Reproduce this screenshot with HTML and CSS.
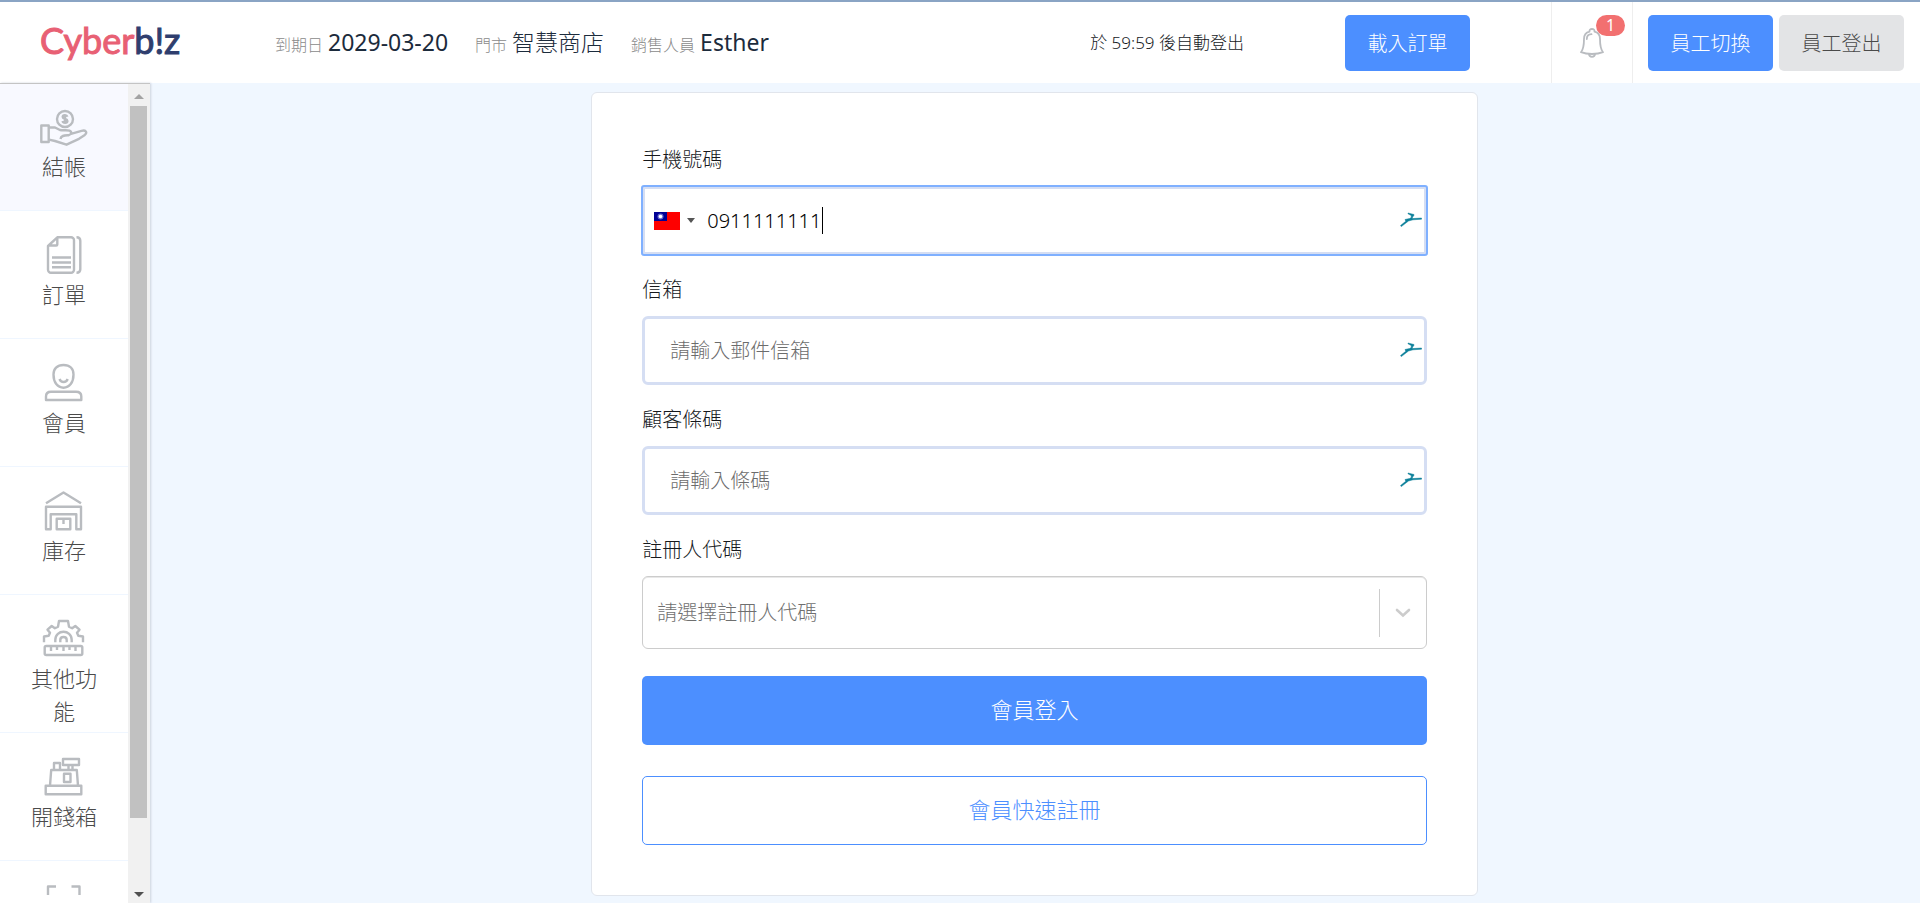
FILE: index.html
```html
<!DOCTYPE html>
<html lang="zh-Hant">
<head>
<meta charset="utf-8">
<title>Cyberbiz POS</title>
<link rel="stylesheet" href="styles.css">
</head>
<body>
<header class="topbar">
  <a class="logo" href="#" aria-label="Cyberbiz"><span class="logo-red">Cyber</span><span class="logo-navy">b!z</span></a>
  <dl class="info">
    <div class="info-item"><dt>到期日</dt><dd>2029-03-20</dd></div>
    <div class="info-item"><dt>門市</dt><dd class="store">智慧商店</dd></div>
    <div class="info-item"><dt>銷售人員</dt><dd>Esther</dd></div>
  </dl>
  <p class="timer">於 59:59 後自動登出</p>
  <button class="btn btn-primary" type="button">載入訂單</button>
  <div class="bell-cell">
    <button class="bell" type="button" aria-label="通知">
      <svg width="24" height="30" viewBox="0 0 24 30" fill="none" stroke="#b9bcc0" stroke-width="1.800" stroke-linejoin="round" stroke-linecap="round"><path d="M9.5 3.6C9.3 1.600 10.300 1 12 1s2.700.6 2.500 2.600C18.500 4.500 20 7.500 20 11c0 7 .8 10.500 3 13.200C19.500 25.600 16 26 12 26S4.500 25.600 1 24.200C3.200 21.500 4 18 4 11c0-3.500 1.500-6.500 5.500-7.400z"/><path d="M9 26.200c.3 3.500 5.700 3.500 6 0M6.800 11c0-2.800 1.600-4.600 4.700-4.800"/></svg>
      <span class="badge">1</span>
    </button>
  </div>
  <div class="staff">
    <button class="btn btn-primary" type="button">員工切換</button>
    <button class="btn btn-muted" type="button">員工登出</button>
  </div>
</header>

<div class="body">
  <aside class="sidebar">
    <nav class="menu">
      <a class="menu-item active" href="#">
        <svg class="icon" viewBox="0 0 48 40"><rect x="1.300" y="18.500" width="7.400" height="16.500"/><circle cx="25" cy="12" r="8"/><path d="M27.300 9.800c-.5-2.300-4.600-2-4.600.2 0 2.500 4.700 1.500 4.700 4 0 2.300-4.400 2.300-4.800 0M25 7.200v9.600"/><path d="M9 20.500h6l5 2.500c4 .8 6.500-.3 9.500.7 2.500 1 2 4-1 4.500-4 .2-7.500 0-8 3.800M31 26.800l10.500-2.900c4-1.200 6.500 1.300 3.300 4L39 31.800l-12.500 5.900L15 34l-6-1.300"/></svg>
        <span>結帳</span>
      </a>
      <a class="menu-item" href="#">
        <svg class="icon" viewBox="0 0 48 40"><path d="M17.300 2.300H31a3 3 0 0 1 3 3v29.400a3 3 0 0 1-3 3H11a3 3 0 0 1-3-3V11zM17.300 2.300V9.500a1 1 0 0 1-1 1H8M36.500 2.300c2.500 0 3.800 1.200 3.800 3.500v28.400c0 2.300-1.300 3.500-3.800 3.500M12 22.500h19M12 27.500h19M12 32.300h19"/></svg>
        <span>訂單</span>
      </a>
      <a class="menu-item" href="#">
        <svg class="icon" viewBox="0 0 48 40"><path d="M23.500 2c6.500 0 10 4 10 9.500 0 8-4 13.200-10 13.200s-10-5.200-10-13.200C13.500 6 17 2 23.500 2zM19.500 16c1.500 4 6.700 4 8.200 0M6 37v-3.500c0-3.500 2-4.700 5-4.700h25c3.500 0 5.300 1.700 5.300 4.700V37z"/></svg>
        <span>會員</span>
      </a>
      <a class="menu-item" href="#">
        <svg class="icon" viewBox="0 0 48 40"><path d="M6 12.300 23.500 1.500 41 12.300M6 15.700h35v22.600h-4.700v-15H10.700v15H6zM16.700 27.700h13.600v10.600H16.700zM23.500 27.700V33"/></svg>
        <span>庫存</span>
      </a>
      <a class="menu-item" href="#">
        <svg class="icon" viewBox="0 0 48 40"><path d="M4 23.300v-5.800l4.700-.8L10 13.700l-2.500-3 4.200-3.700 3.200 2.300L18 7.700 19 2h9l1 5.700 3.100 1.600L35.300 7l4.200 3.700-2.500 3 1.300 3 4.700.8v5.800M15.300 23.300V21c0-11 16.400-11 16.400 0v2.300M20.300 23.300V21c0-4 6.400-4 6.400 0v2.300"/><rect x="4.700" y="27" width="37.600" height="9" rx="1.500"/><path d="M11 27v5M17 27v4M23.500 27v5M29.500 27v4M35.500 27v5"/></svg>
        <span>其他功能</span>
      </a>
      <a class="menu-item" href="#">
        <svg class="icon" viewBox="0 0 48 40"><path d="M5.700 28.700h35.600v8.600H5.700zM10 28.700 11.200 13h25.600L38 28.700M24 16.700h6.500V25H24zM14 13V6h6v7M23 2h16v6H23zM28.500 8v5M32.500 8v5"/></svg>
        <span>開錢箱</span>
      </a>
      <a class="menu-item" href="#" aria-label="掃描">
        <svg class="icon" viewBox="0 0 48 40"><path d="M16 1.500H8V10M31.500 1.500h8V10M8 30v8h8M39.500 30v8h-8"/></svg>
      </a>
    </nav>
    <div class="scrollbar" aria-hidden="true">
      <svg class="arrow arrow-up" viewBox="0 0 22 23"><path d="M6 16h10l-5-5z"/></svg>
      <div class="track"><div class="thumb"></div></div>
      <svg class="arrow arrow-down" viewBox="0 0 22 23"><path d="M6 12h10l-5 5z"/></svg>
    </div>
  </aside>

  <main class="main">
    <form class="card">
      <div class="field">
        <label for="phone">手機號碼</label>
        <div class="control phone">
          <input id="phone" class="text-input" type="tel" value="0911111111">
          <button class="country" type="button" aria-label="台灣">
            <svg width="26" height="18" viewBox="0 0 26 18"><path fill="#fe0000" d="M0 0h26v18H0z"/><path fill="#000095" d="M0 0h13v9H0z"/><circle cx="6.500" cy="4.500" r="3" fill="#6a6ad0"/><circle cx="6.500" cy="4.500" r="1.800" fill="#fff"/></svg>
            <svg width="8" height="5" viewBox="0 0 8 5"><path fill="#555" d="M0 0h8L4 5z"/></svg>
          </button>
          <span class="caret"></span>
          <svg class="bird" viewBox="0 0 22 15"><path d="M8 1l6 1.500-.3 1.500-1.200 1-.2 1.600L21.500 6v1.200L13 7.800 8.500 9 1.300 14.600.5 13.600 5.800 9.200 5 7.500l4.600-1 1.700-1-.1-2L8 1.800z"/></svg>
        </div>
      </div>
      <div class="field">
        <label for="email">信箱</label>
        <div class="control">
          <input id="email" class="text-input" type="email" placeholder="請輸入郵件信箱">
          <svg class="bird" viewBox="0 0 22 15"><path d="M8 1l6 1.500-.3 1.500-1.200 1-.2 1.600L21.500 6v1.200L13 7.800 8.500 9 1.300 14.600.5 13.600 5.800 9.200 5 7.500l4.600-1 1.700-1-.1-2L8 1.800z"/></svg>
        </div>
      </div>
      <div class="field">
        <label for="barcode">顧客條碼</label>
        <div class="control">
          <input id="barcode" class="text-input" type="text" placeholder="請輸入條碼">
          <svg class="bird" viewBox="0 0 22 15"><path d="M8 1l6 1.500-.3 1.500-1.200 1-.2 1.600L21.500 6v1.200L13 7.800 8.500 9 1.300 14.600.5 13.600 5.800 9.200 5 7.500l4.600-1 1.700-1-.1-2L8 1.800z"/></svg>
        </div>
      </div>
      <div class="field">
        <label for="registrar">註冊人代碼</label>
        <div class="control select-wrap">
          <select id="registrar"><option>請選擇註冊人代碼</option></select>
          <span class="indicator"><svg width="16" height="10" viewBox="0 0 16 10"><path d="M2 2l6 5.500L14 2" fill="none" stroke="#ccc" stroke-width="2.600" stroke-linecap="round"/></svg></span>
        </div>
      </div>
      <div class="actions">
        <button class="wide wide-primary" type="submit">會員登入</button>
        <button class="wide wide-outline" type="button">會員快速註冊</button>
      </div>
    </form>
  </main>
</div>
</body>
</html>
```
FILE: styles.css
```css
* { box-sizing: border-box; }

body {
  margin: 0;
  height: 100vh;
  display: flex;
  flex-direction: column;
  overflow: hidden;
  background: #f0f7ff;
  color: #16191d;
  font-family: "Noto Sans", "Noto Sans CJK TC", sans-serif;
  font-weight: 300;
  font-size: 20px;
}

button, input, select { font: inherit; }
a { color: inherit; text-decoration: none; }

/* Top bar */
.topbar {
  display: flex;
  align-items: center;
  flex: none;
  height: 83px;
  border-top: 2px solid #8aa4c4;
  background: #fff;
}

.logo {
  width: 235px;
  margin-left: 40px;
  padding-bottom: 6px;
  font-family: Lato, sans-serif;
  font-weight: 400;
  font-size: 36px;
  line-height: 48px;
  -webkit-text-stroke: 1px;
}
.logo-red { color: #e86074; }
.logo-navy { color: #2f3e6e; }

.info { display: flex; gap: 27px; margin: 0; padding-top: 2px; }
.info-item { display: flex; align-items: baseline; gap: 5px; line-height: 32px; }
.info dt { color: #8a8a8a; font-size: 16px; }
.info dd { margin: 0; color: #1c2b3c; font-size: 23px; font-weight: 400; }
.info .store { font-weight: 300; }

.timer { margin: 0 101px 0 auto; font-size: 17px; line-height: 24px; }

.btn {
  width: 125px;
  height: 56px;
  padding: 0;
  border: 0;
  border-radius: 5px;
  font-size: 20px;
}
.btn-primary { background: #4c8fff; color: #fff; }
.btn-muted { background: #e3e4e6; color: #4a4a4a; }

.bell-cell {
  display: flex;
  align-items: center;
  justify-content: center;
  align-self: stretch;
  width: 82px;
  margin-left: 81px;
  border: solid #eee;
  border-width: 0 1px;
}
.bell { position: relative; padding: 0; border: 0; background: none; height: 30px; }
.bell svg { display: block; }
.badge {
  position: absolute;
  left: 16px;
  top: -13px;
  width: 29px;
  height: 21px;
  border-radius: 11px;
  background: #f27070;
  color: #fff;
  font-size: 16px;
  font-weight: 400;
  line-height: 21px;
  text-align: center;
}
.staff { display: flex; gap: 6px; padding: 0 16px 0 15px; }

/* Sidebar */
.body { display: flex; flex: 1; min-height: 0; }
.sidebar {
  display: flex;
  flex: none;
  width: 150px;
  background: #fff;
  box-shadow: 1px 0 2px #cdd3de;
}
.menu {
  flex: 1;
  overflow: hidden;
}
.menu-item {
  display: flex;
  flex-direction: column;
  align-items: center;
  gap: 3px;
  min-height: 128px;
  padding: 24px 27px 4px;
  border-bottom: 1px solid #eff6ff;
  color: #4a4a4a;
  font-size: 22px;
  line-height: 33px;
  text-align: center;
}
.menu-item.active { background: #f8f9ff; box-shadow: inset 0 1px #c4c4c4; }
.icon {
  flex: none;
  width: 48px;
  height: 40px;
  fill: none;
  stroke: #b9bcc0;
  stroke-width: 2.4;
  stroke-linejoin: round;
}
.scrollbar {
  display: flex;
  flex-direction: column;
  width: 22px;
  background: #f1f1f1;
  box-shadow: inset 0 1px #c4c4c4;
}
.arrow { flex: none; width: 22px; height: 23px; }
.arrow-up { fill: #a3a3a3; }
.arrow-down { fill: #505050; }
.track { flex: 1; padding: 0 3px 0 2px; }
.thumb { height: 92%; background: #c1c1c1; }

/* Member form */
.main { flex: 1; padding: 9px 1px 0 0; }
.card {
  width: calc(50% + 2px);
  margin: 0 auto;
  padding: 50px;
  border: 1px solid #e1e5ec;
  border-radius: 6px;
  background: #fff;
}
.field { margin-bottom: 18px; }
.field label { display: block; margin-bottom: 9px; line-height: 34px; }
.control { position: relative; }
.text-input {
  display: block;
  width: 100%;
  height: 69px;
  padding: 0 40px 0 25px;
  border: 3px solid #d5def3;
  border-radius: 6px;
  background: #fff;
  color: #111;
  outline: none;
}
.text-input::placeholder { color: #6c6c6c; opacity: 1; }
.phone .text-input {
  padding-left: 62px;
  border-radius: 2px;
  outline: 2px solid #7fb0ff;
  outline-offset: -1px;
  color: #000;
}
.country {
  position: absolute;
  top: 0;
  bottom: 0;
  left: 12px;
  display: flex;
  align-items: center;
  gap: 7px;
  padding: 0;
  border: 0;
  background: none;
}
.caret {
  position: absolute;
  top: 21px;
  left: 180px;
  width: 1px;
  height: 27px;
  background: #000;
}
.bird {
  position: absolute;
  top: 26px;
  right: 5px;
  width: 22px;
  height: 15px;
  fill: #0a7f99;
  stroke: #0a7f99;
  stroke-width: 0.5;
}
.select-wrap select {
  display: block;
  width: 100%;
  height: 73px;
  padding: 0 60px 0 14px;
  border: 1px solid #ccc;
  border-radius: 6px;
  appearance: none;
  background: #fff;
  color: #6f6f6f;
  box-shadow: inset 0 1px #e8e8e8;
}
.indicator {
  position: absolute;
  top: 13px;
  bottom: 12px;
  right: 1px;
  display: flex;
  align-items: center;
  justify-content: center;
  width: 47px;
  border-left: 1px solid #ccc;
  pointer-events: none;
}
.actions { display: grid; gap: 31px; padding-top: 9px; }
.wide { height: 69px; padding: 0 0 6px; border-radius: 5px; font-size: 22px; }
.wide-primary { border: 0; background: #4c8fff; color: #fff; }
.wide-outline { border: 1px solid #4c8fff; background: #fff; color: #4c8fff; }
```
